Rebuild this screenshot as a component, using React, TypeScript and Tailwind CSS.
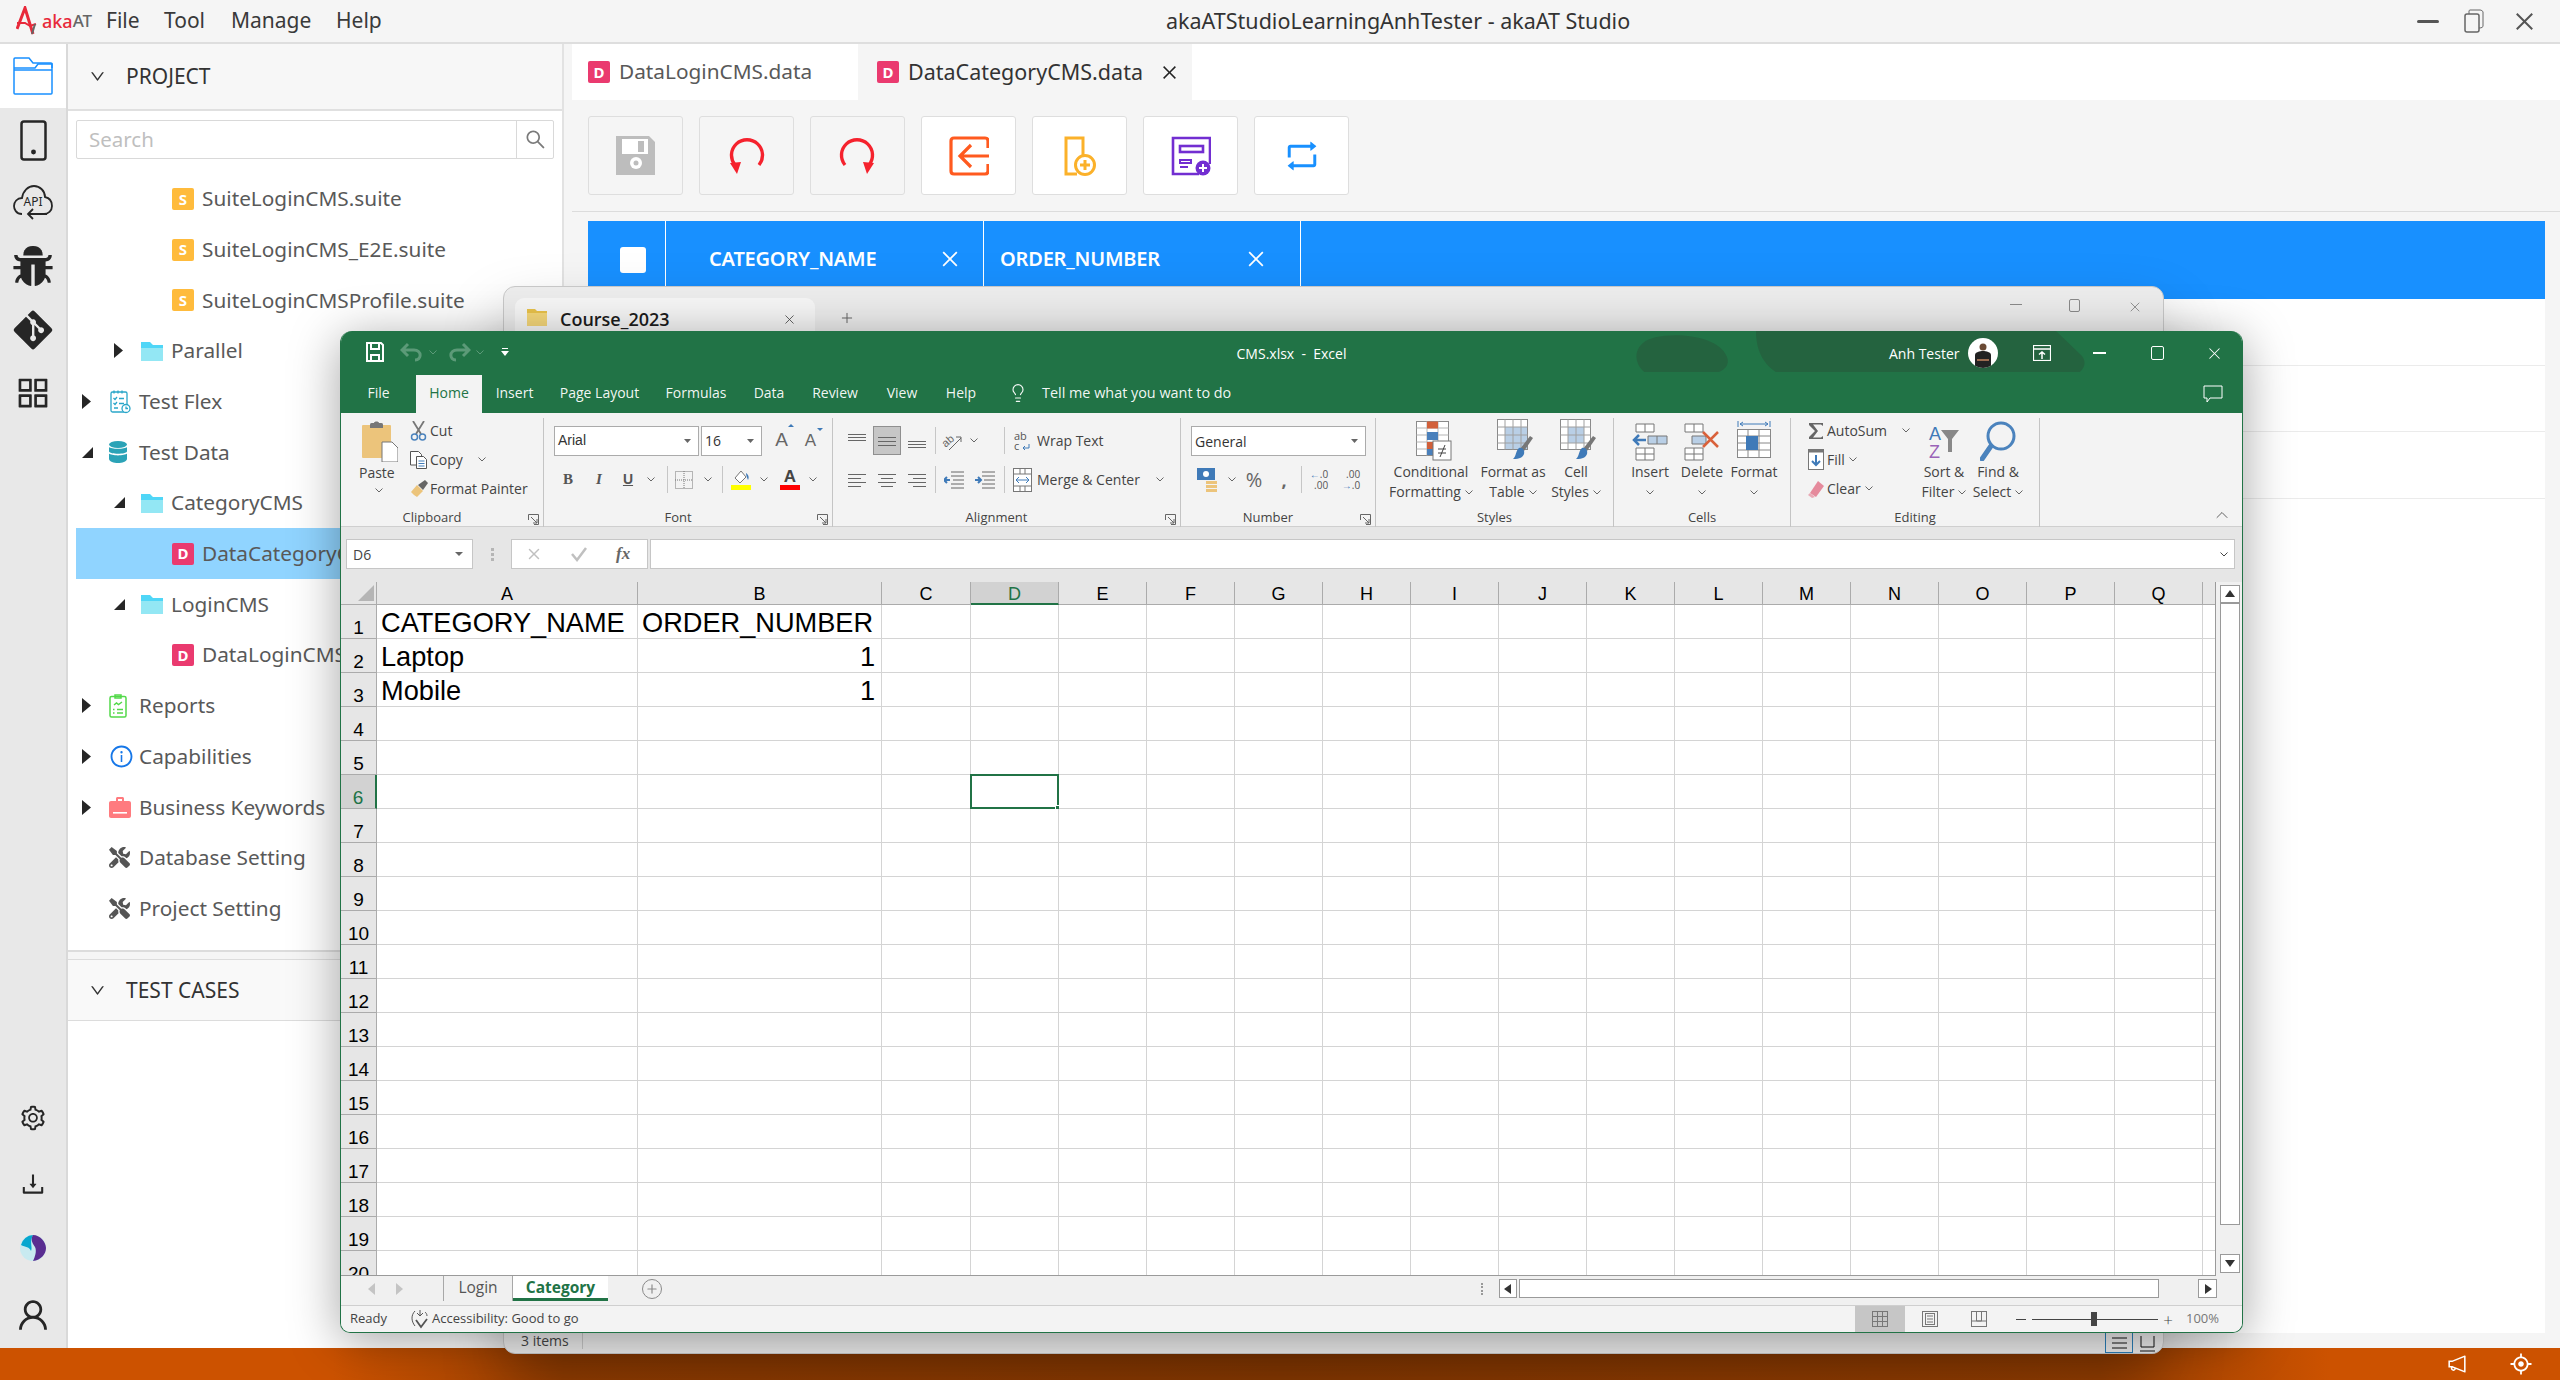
import type { ReactNode } from "react";
import { X, Lightbulb, Plus, ChevronUp } from "lucide-react";
import {
  AiFillBug,
  AiOutlineAppstore,
  AiOutlineSetting,
  AiOutlineDownload,
  AiOutlineUser,
  AiOutlineSearch,
  AiOutlineDown,
  AiOutlineClose,
  AiOutlineRetweet,
  AiOutlineInfoCircle,
  AiOutlineNotification,
  AiOutlineAim,
} from "react-icons/ai";
import { FaGitAlt, FaTools } from "react-icons/fa";

/* ---------- akaAT tree data ---------- */

type Kind = "suite" | "data" | "folder" | "flex" | "db" | "reports" | "info" | "case" | "tools";

const tree: { label: string; depth: number; kind: Kind; caret?: "right" | "open"; active?: boolean }[] = [
  { label: "SuiteLoginCMS.suite", depth: 2, kind: "suite" },
  { label: "SuiteLoginCMS_E2E.suite", depth: 2, kind: "suite" },
  { label: "SuiteLoginCMSProfile.suite", depth: 2, kind: "suite" },
  { label: "Parallel", depth: 1, kind: "folder", caret: "right" },
  { label: "Test Flex", depth: 0, kind: "flex", caret: "right" },
  { label: "Test Data", depth: 0, kind: "db", caret: "open" },
  { label: "CategoryCMS", depth: 1, kind: "folder", caret: "open" },
  { label: "DataCategoryCMS.data", depth: 2, kind: "data", active: true },
  { label: "LoginCMS", depth: 1, kind: "folder", caret: "open" },
  { label: "DataLoginCMS.data", depth: 2, kind: "data" },
  { label: "Reports", depth: 0, kind: "reports", caret: "right" },
  { label: "Capabilities", depth: 0, kind: "info", caret: "right" },
  { label: "Business Keywords", depth: 0, kind: "case", caret: "right" },
  { label: "Database Setting", depth: 0, kind: "tools" },
  { label: "Project Setting", depth: 0, kind: "tools" },
];

function Badge({ letter, color }: { letter: string; color: string }) {
  return (
    <span
      className={`w-[22px] h-[22px] rounded-[2px] flex items-center justify-center text-white font-bold text-[15px] font-['Noto_Sans',sans-serif] ${color}`}
    >
      {letter}
    </span>
  );
}

function TreeFolder() {
  return (
    <svg width="22" height="20" viewBox="0 0 22 20">
      <path d="M0 1h9l3 3h10v4H0z" fill="#4fd6f7" />
      <path d="M0 20V7h22v13z" fill="#93e7f4" />
    </svg>
  );
}

function TreeIcon({ kind }: { kind: Kind }) {
  if (kind === "suite") return <Badge letter="S" color="bg-[#ffbb3c]" />;
  if (kind === "data") return <Badge letter="D" color="bg-[#ea3a6f]" />;
  if (kind === "folder") return <TreeFolder />;
  if (kind === "flex")
    return (
      <svg width="22" height="24" viewBox="0 0 22 24" fill="none" stroke="#2aa6c9" strokeWidth="1.3">
        <rect x="2" y="2" width="16" height="20" rx="1.5" />
        <path d="M5 0.5v3M9 0.5v3M13 0.5v3M4.5 8l1.500 1.500 2-2.500M4.500 13l1.500 1.500 2-2.500M10 8.500h5M10 13.500h5M5 18h4" />
        <circle cx="17" cy="18.5" r="4" fill="#fff" />
        <path d="M17 16.5v2h2" />
      </svg>
    );
  if (kind === "db")
    return (
      <svg width="18" height="22" viewBox="0 0 18 22" fill="#2ba3b7">
        <ellipse cx="9" cy="3.5" rx="9" ry="3.5" />
        <path d="M0 6c2 2.400 16 2.400 18 0v4.400c-1 3-17 3-18 0zM0 12.600c2 2.400 16 2.400 18 0V18c-1 5.300-17 5.300-18 0z" />
      </svg>
    );
  if (kind === "reports")
    return (
      <svg width="18" height="24" viewBox="0 0 18 24" fill="none" stroke="#53d94a" strokeWidth="1.5">
        <rect x="1" y="2.500" width="16" height="20.500" rx="1.500" />
        <path d="M6 1h6v3H6zM5 11l2.500-2 2 1.500L13 8M4 15.500h1.500M8 15.500h6M4 19h1.500M8 19h6" />
      </svg>
    );
  if (kind === "info") return <AiOutlineInfoCircle className="text-[#1677e8]" size={25} />;
  if (kind === "case")
    return (
      <svg width="22" height="21" viewBox="0 0 22 21" fill="#ff7b7f">
        <path d="M7 4V1.500C7 .7 7.700 0 8.500 0h5c.8 0 1.500.7 1.500 1.500V4h-2V2H9v2z" />
        <path d="M2 4h18c1.100 0 2 .9 2 2v13c0 1.100-.9 2-2 2H2c-1.100 0-2-.9-2-2V6c0-1.100.9-2 2-2z" />
        <rect x="4" y="15" width="14" height="1.600" fill="#fff" />
      </svg>
    );
  return <FaTools className="text-[#555]" size={21} />;
}

function Caret({ type }: { type: "right" | "open" }) {
  return type === "right" ? (
    <svg width="9" height="15" viewBox="0 0 9 15">
      <path d="M0 0l9 7.500L0 15z" fill="#262626" />
    </svg>
  ) : (
    <svg width="11" height="11" viewBox="0 0 11 11">
      <path d="M11 0v11H0z" fill="#262626" />
    </svg>
  );
}

function TreeRow({ row }: { row: (typeof tree)[number] }) {
  return (
    <div className={`h-[50.7px] flex items-center shrink-0 ${row.active ? "bg-[#90d4ff]" : ""}`}>
      <span
        className={`shrink-0 flex justify-start ${
          row.depth === 0 ? "w-[33px] pl-[6px]" : row.depth === 1 ? "w-[65px] pl-[38px]" : "w-[96px]"
        }`}
      >
        {row.caret && <Caret type={row.caret} />}
      </span>
      <span className="w-[30px] shrink-0 flex items-center">
        <TreeIcon kind={row.kind} />
      </span>
      <span className="text-[20.800px] text-[#595959] whitespace-nowrap">{row.label}</span>
    </div>
  );
}

/* ---------- toolbar icons of the data editor ---------- */

function ArcArrow({ flip }: { flip?: boolean }) {
  return (
    <svg width="37" height="37" viewBox="0 0 37 37" className={flip ? "-scale-x-100" : ""}>
      <path d="M7 28A15.500 15.500 0 1 1 31 28" fill="none" stroke="#f5222d" strokeWidth="3.400" />
      <path d="M2 26l11-1-4 12z" fill="#f5222d" />
    </svg>
  );
}

function ToolBtn({ children, dim }: { children: ReactNode; dim?: boolean }) {
  return (
    <div
      className={`w-[95px] h-[79px] border border-[#dedede] rounded-[3px] flex items-center justify-center ${
        dim ? "" : "bg-white"
      }`}
    >
      {children}
    </div>
  );
}

function DataToolbar() {
  return (
    <div className="h-[112px] shrink-0 border-b border-[#dcdcdc] flex items-center gap-[16px] pl-[16px]">
      <ToolBtn dim>
        <svg width="39" height="39" viewBox="0 0 39 39">
          <path d="M0 0h33l6 6v33H0z" fill="#bdbdbd" />
          <rect x="6" y="3" width="26" height="15" fill="#fff" />
          <rect x="22" y="5" width="6" height="11" fill="#bdbdbd" />
          <circle cx="20" cy="27" r="6" fill="#fff" />
          <circle cx="20" cy="27" r="2.500" fill="#bdbdbd" />
        </svg>
      </ToolBtn>
      <ToolBtn dim>
        <ArcArrow />
      </ToolBtn>
      <ToolBtn dim>
        <ArcArrow flip />
      </ToolBtn>
      <ToolBtn>
        <svg width="40" height="40" viewBox="0 0 40 40" fill="none" stroke="#ff5a1f" strokeWidth="3.200">
          <path d="M39 12V5c0-2-1-3-3-3H5C3 2 2 3 2 5v30c0 2 1 3 3 3h31c2 0 3-1 3-3v-7" />
          <path d="M40 20H12M22 9L11 20l11 11" />
        </svg>
      </ToolBtn>
      <ToolBtn>
        <svg width="32" height="40" viewBox="0 0 32 40" fill="none" stroke="#fbb12a" strokeWidth="3">
          <path d="M19 22V2H2v36h11" />
          <circle cx="21" cy="29" r="9.500" fill="#fff" />
          <path d="M21 24v10M16 29h10" />
        </svg>
      </ToolBtn>
      <ToolBtn>
        <svg width="40" height="40" viewBox="0 0 40 40" fill="none" stroke="#722ed1" strokeWidth="2.600">
          <path d="M39 28V2H2v36h26" />
          <rect x="9" y="10" width="23" height="6" />
          <path d="M9 24h11v3H9zM9 31h8" strokeWidth="2" />
          <circle cx="32" cy="32" r="7.500" fill="#722ed1" stroke="none" />
          <path d="M32 28v8M28 32h8" stroke="#fff" strokeWidth="2" />
        </svg>
      </ToolBtn>
      <ToolBtn>
        <AiOutlineRetweet className="text-[#1890ff]" size={38} />
      </ToolBtn>
    </div>
  );
}

/* ---------- excel ---------- */

function Chev({ color = "#666" }: { color?: string }) {
  return (
    <svg width="8" height="5" viewBox="0 0 8 5" className="shrink-0">
      <path d="M.5.500L4 4 7.500.500" fill="none" stroke={color} strokeWidth="1" />
    </svg>
  );
}

function Expander() {
  return (
    <svg width="11" height="11" viewBox="0 0 11 11" className="absolute right-[4px] bottom-[2px]" fill="none" stroke="#666">
      <path d="M.5 6V.500H10.500V10.500H6M3 3l6 6M5 9h4V5" />
    </svg>
  );
}

function RibbonGroup({
  w,
  label,
  pad,
  expand,
  children,
}: {
  w: string;
  label: string;
  pad?: string;
  expand?: boolean;
  children: ReactNode;
}) {
  return (
    <div className={`shrink-0 h-[109px] mt-[5px] border-r border-[#c4c4c4] flex flex-col ${w}`}>
      <div className={`flex-1 min-h-0 ${pad ?? ""}`}>{children}</div>
      <div className={`relative h-[19px] text-center text-[13px] leading-[19px] text-[#444] ${expand ? "pr-[20px]" : ""}`}>
        {label}
        {expand && <Expander />}
      </div>
    </div>
  );
}

function Sep() {
  return <span className="w-[1px] h-[27px] bg-[#c6c6c6] shrink-0" />;
}

function Cell({ w, children }: { w: string; children?: ReactNode }) {
  return <span className={`shrink-0 flex items-center justify-center ${w}`}>{children}</span>;
}

function Lines({ rows, align }: { rows: number[]; align?: "left" | "center" | "right" }) {
  return (
    <svg width="18" height="16" viewBox="0 0 18 16" stroke="#666" strokeWidth="1">
      {rows.map((r, i) => {
        const short = align && i % 2 === 1;
        const x1 = short && align === "right" ? 5 : short && align === "center" ? 3 : 0;
        const x2 = short && align === "left" ? 13 : short && align === "center" ? 15 : 18;
        return <line key={i} x1={x1} x2={x2} y1={r + 0.5} y2={r + 0.5} />;
      })}
    </svg>
  );
}

function SmallRow({ icon, label, chev }: { icon: ReactNode; label: string; chev?: string }) {
  return (
    <div className="h-[29px] flex items-center">
      <span className="w-[23px] flex justify-center shrink-0">{icon}</span>
      <span>{label}</span>
      {chev && (
        <span className={chev}>
          <Chev />
        </span>
      )}
    </div>
  );
}

function BigBtn({ w, icon, lines, chevInline }: { w: string; icon: ReactNode; lines: string[]; chevInline?: boolean }) {
  return (
    <div className={`shrink-0 flex flex-col items-center leading-[20px] ${w}`}>
      <div className="h-[39px] flex items-end justify-center">{icon}</div>
      <div className="h-[1px]" />
      {lines.map((l, i) => (
        <div key={l} className="flex items-center gap-[4px] whitespace-nowrap">
          {l}
          {chevInline && i === lines.length - 1 && <Chev />}
        </div>
      ))}
      {!chevInline && (
        <div className="h-[20px] flex items-center">
          <Chev />
        </div>
      )}
    </div>
  );
}

function CondFormatIcon() {
  return (
    <svg width="36" height="40" viewBox="0 0 36 40" className="ml-[5px]">
      <rect x=".5" y=".5" width="32" height="34" fill="#fff" stroke="#8a8a8a" />
      <path d="M.5 7h32M.5 14h32M.5 21h32M.5 28h32M11 .5v34M22 .5v34" stroke="#b5b5b5" />
      <rect x="11" y=".5" width="11" height="7" fill="#d2603a" />
      <rect x="11" y="11" width="11" height="8" fill="#4a80bb" />
      <rect x="11" y="21" width="11" height="7" fill="#d2603a" />
      <rect x="11" y="28" width="11" height="6" fill="#4a80bb" />
      <rect x="17" y="20" width="18" height="19" fill="#fff" stroke="#777" />
      <path d="M22 28h8M22 32h8M29 24l-5 12" stroke="#444" fill="none" />
    </svg>
  );
}

function TableBrushIcon({ fillRect }: { fillRect: string }) {
  return (
    <svg width="36" height="42" viewBox="0 0 36 42" className="ml-[3px]">
      <rect x=".5" y=".5" width="30" height="30" fill="#fff" stroke="#8a8a8a" />
      <path d={fillRect} fill="#b9cfe6" />
      <path d="M.5 8h30M.5 16h30M.5 24h30M8 .5v30M16 .5v30M24 .5v30" stroke="#a0a0a0" />
      <path d="M33 17l3 2-9 13-4-2z" fill="#777" />
      <path d="M22 29c4-1 6 3 5 6-1 3-4 5-11 5 3-2 3-9 6-11z" fill="#3f7ab8" />
    </svg>
  );
}

function Ribbon() {
  return (
    <div className="h-[114px] shrink-0 bg-[#f3f3f3] border-b border-[#cfcfcf] flex text-[14px] text-[#444] font-['Open_Sans',sans-serif]">
      <RibbonGroup w="w-[203px]" label="Clipboard" expand>
        <div className="flex">
          <div className="w-[66px] pl-[21px] pt-[3px] flex flex-col items-start">
            <svg width="36" height="41" viewBox="0 0 36 41">
              <rect x="0" y="4" width="29" height="33" rx="1" fill="#ecc47b" />
              <path d="M8 4c0-2 1-2 3-2h1c0-2 5-2 5 0h1c2 0 3 0 3 2v3H8z" fill="#777" />
              <path d="M20 21h10l6 6v14H20z" fill="#fff" stroke="#777" />
            </svg>
            <span className="-ml-[3px] leading-[20px] mt-[1px]">Paste</span>
            <span className="ml-[13px] mt-[5px] block">
              <Chev />
            </span>
          </div>
          <div className="-mt-[2px]">
            <SmallRow
              icon={
                <svg width="17" height="20" viewBox="0 0 17 20" fill="none">
                  <path d="M3 0l8 13M14 0L6 13" stroke="#777" strokeWidth="1.800" />
                  <circle cx="4.500" cy="16" r="3" stroke="#4b83bd" strokeWidth="1.500" />
                  <circle cx="12.500" cy="16" r="3" stroke="#4b83bd" strokeWidth="1.500" />
                </svg>
              }
              label="Cut"
            />
            <SmallRow
              icon={
                <svg width="17" height="18" viewBox="0 0 17 18" fill="#fff" stroke="#555">
                  <path d="M.5.500h8l3 3V14H.5z" />
                  <path d="M6.500 5.500h7l3 3v9h-10z" />
                  <path d="M8.500 10h6M8.500 12.500h6M8.500 15h6" stroke="#3f7ab8" />
                </svg>
              }
              label="Copy"
              chev="ml-[15px]"
            />
            <SmallRow
              icon={
                <svg width="18" height="18" viewBox="0 0 18 18">
                  <path d="M1 12l6-7 6 6-6 6c-2-1-4-3-6-5z" fill="#ecc47b" />
                  <path d="M8 5l7-5 3 3-5 7z" fill="#666" />
                </svg>
              }
              label="Format Painter"
            />
          </div>
        </div>
      </RibbonGroup>

      <RibbonGroup w="w-[289px]" label="Font" expand pad="pl-[10px] pt-[8px]">
        <div className="flex items-center h-[29px]">
          <div className="w-[145px] h-[30px] bg-white border border-[#ababab] flex items-center justify-between px-[3px] pr-[7px] font-['Liberation_Sans',sans-serif] text-[#333]">
            Arial
            <svg width="7" height="4" viewBox="0 0 7 4"><path d="M0 0h7L3.500 4z" fill="#666" /></svg>
          </div>
          <div className="ml-[2px] w-[61px] h-[30px] bg-white border border-[#ababab] flex items-center justify-between px-[3px] pr-[7px] text-[#333]">
            16
            <svg width="7" height="4" viewBox="0 0 7 4"><path d="M0 0h7L3.500 4z" fill="#666" /></svg>
          </div>
          <span className="ml-[5px] w-[29px] text-center text-[19px] text-[#666] font-['Liberation_Sans',sans-serif] relative">
            A<span className="absolute -top-[2px] right-[2px] w-0 h-0 border-x-[3px] border-x-transparent border-b-[3px] border-b-[#3f7ab8]" />
          </span>
          <span className="w-[29px] text-center text-[17px] text-[#666] font-['Liberation_Sans',sans-serif] relative">
            A<span className="absolute -top-[0px] right-[2px] w-0 h-0 border-x-[3px] border-x-transparent border-t-[3px] border-t-[#3f7ab8]" />
          </span>
        </div>
        <div className="flex items-center h-[29px] mt-[10px] pl-[1px] font-['Liberation_Sans',sans-serif] text-[#555]">
          <Cell w="w-[26px]"><b className="font-['Liberation_Serif',serif] text-[15px]">B</b></Cell>
          <Cell w="w-[36px]"><i className="font-['Liberation_Serif',serif] font-bold text-[15px]">I</i></Cell>
          <Cell w="w-[22px]"><u className="font-bold text-[14px]">U</u></Cell>
          <Cell w="w-[24px]"><Chev /></Cell>
          <Cell w="w-[8px]"><Sep /></Cell>
          <Cell w="w-[26px]">
            <svg width="18" height="18" viewBox="0 0 18 18" fill="none" stroke="#777" strokeDasharray="1 1">
              <rect x=".5" y=".5" width="17" height="17" />
              <path d="M9 0v18M0 9h18" />
            </svg>
          </Cell>
          <Cell w="w-[22px]"><Chev /></Cell>
          <Cell w="w-[6px]"><Sep /></Cell>
          <Cell w="w-[32px]">
            <svg width="20" height="21" viewBox="0 0 20 21">
              <path d="M4 9l6-7 5 6-6 6z" fill="#fff" stroke="#777" />
              <path d="M15 4c3 2 3 5 2 7-1-2-2-5-2-7z" fill="#3f7ab8" />
              <rect y="16" width="20" height="5" fill="#ffff00" />
            </svg>
          </Cell>
          <Cell w="w-[14px]"><Chev /></Cell>
          <Cell w="w-[38px]">
            <span className="flex flex-col items-center">
              <b className="text-[17px] leading-[16px] text-[#444]">A</b>
              <span className="w-[20px] h-[5px] bg-[#ff0000]" />
            </span>
          </Cell>
          <Cell w="w-[8px]"><Chev /></Cell>
        </div>
      </RibbonGroup>

      <RibbonGroup w="w-[348px]" label="Alignment" expand pad="pl-[9px] pt-[8px]">
        <div className="flex items-center h-[29px]">
          <Cell w="w-[30px]"><Lines rows={[1, 4, 7]} /></Cell>
          <Cell w="w-[30px]">
            <span className="w-[28px] h-[29px] bg-[#c6c6c6] border border-[#8f8f8f] flex items-center justify-center">
              <Lines rows={[4, 8, 12]} />
            </span>
          </Cell>
          <Cell w="w-[30px]"><Lines rows={[8, 11, 14]} /></Cell>
          <Cell w="w-[6px]"><Sep /></Cell>
          <Cell w="w-[28px]">
            <svg width="22" height="22" viewBox="0 0 22 22">
              <text x="1" y="14" fontSize="11" fill="#666" transform="rotate(-40 8 11)" fontFamily="Liberation Sans">ab</text>
              <path d="M8 20L20 8M15 7h5v5" fill="none" stroke="#666" />
            </svg>
          </Cell>
          <Cell w="w-[16px]"><Chev /></Cell>
          <span className="w-[19px]" />
          <Cell w="w-[6px]"><Sep /></Cell>
          <Cell w="w-[30px]">
            <span className="text-[11px] leading-[10px] text-[#555] relative w-[16px]">
              ab
              <br />c
              <svg width="8" height="7" viewBox="0 0 8 7" className="absolute right-0 bottom-0" fill="none" stroke="#3f7ab8">
                <path d="M7 0v4H1M3 2L1 4l2 2" />
              </svg>
            </span>
          </Cell>
          <span>Wrap Text</span>
        </div>
        <div className="flex items-center h-[29px] mt-[10px]">
          <Cell w="w-[30px]"><Lines rows={[2, 6, 10, 14]} align="left" /></Cell>
          <Cell w="w-[30px]"><Lines rows={[2, 6, 10, 14]} align="center" /></Cell>
          <Cell w="w-[30px]"><Lines rows={[2, 6, 10, 14]} align="right" /></Cell>
          <Cell w="w-[6px]"><Sep /></Cell>
          <Cell w="w-[32px]">
            <svg width="20" height="18" viewBox="0 0 20 18" stroke="#666">
              <path d="M7 1h13M7 5h13M9 9h11M7 13h13M7 17h13" />
              <path d="M6 9H0M3 6L0 9l3 3" stroke="#3f7ab8" strokeWidth="2" fill="none" />
            </svg>
          </Cell>
          <Cell w="w-[30px]">
            <svg width="20" height="18" viewBox="0 0 20 18" stroke="#666">
              <path d="M7 1h13M7 5h13M9 9h11M7 13h13M7 17h13" />
              <path d="M0 9h6M3 6l3 3-3 3" stroke="#3f7ab8" strokeWidth="2" fill="none" />
            </svg>
          </Cell>
          <span className="w-[1px]" />
          <Cell w="w-[6px]"><Sep /></Cell>
          <Cell w="w-[30px]">
            <svg width="19" height="24" viewBox="0 0 19 24" fill="none" stroke="#777">
              <rect x=".5" y=".5" width="18" height="23" fill="#fff" />
              <path d="M0 6h19M0 18h19M7 0v6M12 0v6M7 18v6M12 18v6" />
              <path d="M3 12h13M6 9l-3 3 3 3M13 9l3 3-3 3" stroke="#3f7ab8" />
            </svg>
          </Cell>
          <span>Merge &amp; Center</span>
          <span className="ml-[16px]"><Chev /></span>
        </div>
      </RibbonGroup>

      <RibbonGroup w="w-[195px]" label="Number" expand pad="pl-[10px] pt-[8px]">
        <div className="w-[175px] h-[30px] bg-white border border-[#ababab] flex items-center justify-between px-[3px] pr-[7px] text-[#333]">
          General
          <svg width="7" height="4" viewBox="0 0 7 4"><path d="M0 0h7L3.500 4z" fill="#666" /></svg>
        </div>
        <div className="flex items-center h-[29px] mt-[9px]">
          <Cell w="w-[34px]">
            <svg width="22" height="24" viewBox="0 0 22 24">
              <rect width="18" height="12" fill="#3f7ab8" />
              <circle cx="9" cy="6" r="3" fill="#fff" />
              <rect x="9" y="13" width="11" height="3" fill="#ecc47b" />
              <rect x="9" y="17" width="11" height="3" fill="#ecc47b" />
              <rect x="9" y="21" width="11" height="3" fill="#ecc47b" />
            </svg>
          </Cell>
          <Cell w="w-[14px]"><Chev /></Cell>
          <Cell w="w-[30px]"><span className="text-[20px] text-[#666]">%</span></Cell>
          <Cell w="w-[30px]"><b className="text-[18px] leading-[10px] text-[#666]">,</b></Cell>
          <span className="w-[2px]" />
          <Sep />
          <Cell w="w-[34px]">
            <span className="text-[10px] leading-[11px] text-[#555] text-right">
              <span className="text-[#3f7ab8]">←</span>.0
              <br />.00
            </span>
          </Cell>
          <Cell w="w-[30px]">
            <span className="text-[10px] leading-[11px] text-[#555] text-right">
              .00
              <br />
              <span className="text-[#3f7ab8]">→</span>.0
            </span>
          </Cell>
        </div>
      </RibbonGroup>

      <RibbonGroup w="w-[238px]" label="Styles" pad="pl-[5px] pt-[4px] flex">
        <BigBtn w="w-[100px]" icon={<CondFormatIcon />} lines={["Conditional", "Formatting"]} chevInline />
        <BigBtn w="w-[64px]" icon={<TableBrushIcon fillRect="M8 8h22v22H8z" />} lines={["Format as", "Table"]} chevInline />
        <BigBtn w="w-[62px]" icon={<TableBrushIcon fillRect="M8 8h16v16H8z" />} lines={["Cell", "Styles"]} chevInline />
      </RibbonGroup>

      <RibbonGroup w="w-[177px]" label="Cells" pad="pl-[10px] pt-[4px] flex">
        <BigBtn
          w="w-[52px]"
          lines={["Insert"]}
          icon={
            <svg width="36" height="38" viewBox="0 0 36 38" fill="#fff" stroke="#777">
              <path d="M4 1h18v8H4zM13 1v8M4 25h18v12H4zM4 31h18M13 25v12" />
              <path d="M16 13h19v8H16zM25 13v8" fill="#b9cfe6" />
              <path d="M14 17H2M7 12l-5 5 5 5" fill="none" stroke="#3f7ab8" strokeWidth="2.500" />
            </svg>
          }
        />
        <BigBtn
          w="w-[52px]"
          lines={["Delete"]}
          icon={
            <svg width="36" height="38" viewBox="0 0 36 38" fill="#fff" stroke="#777">
              <path d="M1 1h18v8H1zM10 1v8M1 25h18v12H1zM1 31h18M10 25v12" />
              <path d="M8 13h14v8H8z" fill="#b9cfe6" />
              <path d="M19 9l15 15M34 9L19 24" stroke="#d9613b" strokeWidth="2.500" fill="none" />
            </svg>
          }
        />
        <BigBtn
          w="w-[52px]"
          lines={["Format"]}
          icon={
            <svg width="34" height="40" viewBox="0 0 34 40" fill="#fff" stroke="#888">
              <path d="M1 0v6M33 0v6M3 3h28M3 3l3-2M3 3l3 2M31 3l-3-2M31 3l-3 2" stroke="#3f7ab8" fill="none" />
              <rect x=".5" y="8.500" width="33" height="28" />
              <path d="M0 15h34M0 22h34M0 29h34M11 8v28M22 8v28" fill="none" />
              <rect x="9" y="15" width="12" height="14" fill="#3f7ab8" stroke="none" />
            </svg>
          }
        />
      </RibbonGroup>

      <RibbonGroup w="w-[249px]" label="Editing" pad="pl-[13px] flex">
        <div className="w-[114px] -mt-[2px]">
          <SmallRow
            icon={
              <svg width="16" height="18" viewBox="0 0 16 18">
                <path d="M1 1h14v3l-2-1.500H5l5 6.500-5 6.500h8l2-1.500v3H1v-2l6-6-6-6z" fill="#666" />
              </svg>
            }
            label="AutoSum"
            chev="ml-[15px]"
          />
          <SmallRow
            icon={
              <svg width="16" height="21" viewBox="0 0 16 21" fill="#fff" stroke="#777">
                <rect x=".5" y=".5" width="15" height="20" />
                <rect y="0" width="16" height="3" fill="#777" />
                <path d="M8 6v10M4 12l4 4 4-4" stroke="#3f7ab8" strokeWidth="2" fill="none" />
              </svg>
            }
            label="Fill"
            chev="ml-[4px]"
          />
          <SmallRow
            icon={
              <svg width="16" height="18" viewBox="0 0 16 18">
                <path d="M10 1l6 5-8 11-6-4z" fill="#e58a9c" />
                <path d="M2 13l-2 2 4 3 3-1z" fill="#e9a9b6" />
              </svg>
            }
            label="Clear"
            chev="ml-[4px]"
          />
        </div>
        <div className="flex pt-[4px]">
          <BigBtn
            w="w-[52px]"
            lines={["Sort &", "Filter"]}
            chevInline
            icon={
              <span className="flex items-start">
                <span className="flex flex-col text-[18px] leading-[18px] font-['Liberation_Sans',sans-serif]">
                  <span className="text-[#3f7ab8]">A</span>
                  <span className="text-[#9a63b8]">Z</span>
                </span>
                <svg width="18" height="24" viewBox="0 0 18 24" className="mt-[5px]">
                  <path d="M0 0h18l-7 9v13H7V9z" fill="#888" />
                </svg>
              </span>
            }
          />
          <BigBtn
            w="w-[56px]"
            lines={["Find &", "Select"]}
            chevInline
            icon={
              <svg width="36" height="40" viewBox="0 0 36 40" fill="none" stroke="#4b83bd">
                <circle cx="21" cy="15" r="13" strokeWidth="3" />
                <path d="M11 25L2 38" strokeWidth="5" strokeLinecap="round" />
              </svg>
            }
          />
        </div>
      </RibbonGroup>

      <div className="flex-1 flex items-end justify-end pr-[10px] pb-[1px]">
        <ChevronUp size={20} strokeWidth={1} className="text-[#444]" />
      </div>
    </div>
  );
}

const cols = ["A", "B", "C", "D", "E", "F", "G", "H", "I", "J", "K", "L", "M", "N", "O", "P", "Q", "R"];
const cellData: Record<string, string> = {
  A1: "CATEGORY_NAME",
  B1: "ORDER_NUMBER",
  A2: "Laptop",
  B2: "1",
  A3: "Mobile",
  B3: "1",
};

function Sheet() {
  const rows = Array.from({ length: 20 }, (_, i) => i + 1);
  return (
    <div className="flex-1 min-w-0 overflow-hidden border-r border-b border-[#9a9a9a] bg-white grid grid-cols-[36px_261px_244px_89px_repeat(14,88px)_14px] grid-rows-[23px_repeat(20,34px)] font-['Liberation_Sans',sans-serif] text-black">
      <div className="bg-[#e6e6e6] border-r border-b border-[#ababab] flex items-end justify-end p-[3px] pr-[2px]">
        <svg width="16" height="16" viewBox="0 0 16 16"><path d="M16 0v16H0z" fill="#b5b5b5" /></svg>
      </div>
      {cols.map((c) => (
        <div
          key={c}
          className={`text-[18px] leading-[25px] text-center border-r ${
            c === "D"
              ? "bg-[#d2d2d2] text-[#217346] border-b-[2px] border-b-[#217346] border-r-[#ababab]"
              : "bg-[#e6e6e6] border-b border-[#ababab]"
          }`}
        >
          {c === "R" ? "" : c}
        </div>
      ))}
      {rows.map((r) => (
        <RowCells key={r} r={r} />
      ))}
    </div>
  );
}

function RowCells({ r }: { r: number }) {
  return (
    <>
      <div
        className={`text-[19px] text-center leading-[20px] pt-[13px] border-b border-[#ababab] ${
          r === 6 ? "bg-[#d2d2d2] text-[#217346] border-r-[2px] border-r-[#217346]" : "bg-[#e6e6e6] border-r"
        }`}
      >
        {r}
      </div>
      {cols.map((c) => {
        const v = cellData[`${c}${r}`];
        const num = v === "1";
        return (
          <div
            key={c}
            className={`relative border-r border-b border-[#d4d4d4] text-[27.200px] leading-[36px] whitespace-nowrap ${
              num ? "text-right pr-[6px]" : "pl-[4px]"
            }`}
          >
            {v}
            {c === "D" && r === 6 && (
              <span className="absolute -left-[1px] -top-[1px] -right-[1px] -bottom-[1px] border-2 border-[#217346]">
                <span className="absolute -right-[3px] -bottom-[3px] w-[5px] h-[5px] bg-[#217346] border border-white" />
              </span>
            )}
          </div>
        );
      })}
    </>
  );
}

function TriBtn({ dir, cls }: { dir: "up" | "down" | "left" | "right"; cls: string }) {
  const d = { up: "M5 1l5 7H0z", down: "M0 1h10L5 8z", left: "M8 0v10L1 5z", right: "M2 0v10l7-5z" }[dir];
  return (
    <div className={`bg-white border border-[#9a9a9a] flex items-center justify-center shrink-0 ${cls}`}>
      <svg width="10" height="10" viewBox="0 0 10 10">
        <path d={d} fill="#333" />
      </svg>
    </div>
  );
}

function ExcelWindow() {
  return (
    <div className="absolute z-20 left-[340px] top-[331px] w-[1903px] h-[1002px] rounded-t-[12px] rounded-b-[10px] bg-[#f3f3f3] border border-[#217346] border-t-0 flex flex-col overflow-hidden shadow-[0_8px_50px_rgba(0,0,0,0.36)] font-['Open_Sans',sans-serif]">
      {/* title row with the green pattern */}
      <div className="relative h-[41px] shrink-0 bg-[#217346] text-white flex items-center pt-[4px]">
        <svg width="620" height="82" viewBox="0 0 620 82" className="absolute left-[1290px] top-0" fill="#24633f">
          <path d="M12 12c12-12 74-12 84 14 6 16-20 22-62 22l-22 8 6-12C6 38 0 22 12 12z" />
          <path d="M125 0h300l26 25c10 14-10 30-60 26-30 8-60 12-90 2-30 4-66 10-90 6-40-6-86-10-86-59z" />
          <path d="M500 56c10-12 40-20 76-8 10 10-30 22-76 8z" />
        </svg>
        <div className="absolute left-[25px] top-[11px] flex items-center">
          <svg width="18" height="20" viewBox="0 0 18 20" fill="none" stroke="#fff" strokeWidth="2">
            <path d="M1 1h14l2 2v16H1z" />
            <path d="M5 1v6h8V1M5 19v-6h8v6" />
          </svg>
          <svg width="24" height="20" viewBox="0 0 24 20" fill="none" stroke="#5c9a78" strokeWidth="3" className="ml-[16px]">
            <path d="M8 2L2 8l6 6M3 8h11c8 0 8 10 1 10" />
          </svg>
          <span className="ml-[5px]"><Chev color="#5c9a78" /></span>
          <svg width="24" height="20" viewBox="0 0 24 20" fill="none" stroke="#5c9a78" strokeWidth="3" className="ml-[10px]">
            <path d="M16 2l6 6-6 6M21 8H10C2 8 2 18 9 18" />
          </svg>
          <span className="ml-[5px]"><Chev color="#5c9a78" /></span>
          <svg width="8" height="8" viewBox="0 0 8 8" className="ml-[17px]" fill="#fff">
            <path d="M1 0h6v1H1zM0 3h8L4 8z" />
          </svg>
        </div>
        <span className="relative mx-auto text-[14px]">CMS.xlsx &nbsp;-&nbsp; Excel</span>
        <div className="absolute left-[1548px] top-[7px] flex items-center">
          <span className="text-[14px] w-[79px]">Anh Tester</span>
          <span className="w-[30px] h-[30px] rounded-full bg-white overflow-hidden flex items-center justify-center">
            <svg width="20" height="30" viewBox="0 0 20 30">
              <circle cx="10" cy="9" r="3.500" fill="#6b4a35" />
              <path d="M2 30V17c0-3 5-4 8-4s8 1 8 4v13z" fill="#222" />
              <path d="M4 21h12v2H4z" fill="#9a6b4f" />
            </svg>
          </span>
          <svg width="18" height="16" viewBox="0 0 18 16" fill="none" stroke="#fff" strokeWidth="1.200" className="ml-[35px]">
            <rect x=".5" y=".5" width="17" height="15" />
            <path d="M0 4h18M9 14V7M6 9.500L9 7l3 2.500" strokeWidth="1.500" />
          </svg>
          <span className="w-[13px] h-[1.500px] bg-white ml-[42px]" />
          <span className="w-[13px] h-[14px] border border-white rounded-[2px] ml-[45px]" />
          <X size={19} strokeWidth={1.300} className="text-white ml-[41px]" />
        </div>
      </div>

      {/* ribbon tabs */}
      <div className="relative h-[41px] shrink-0 bg-[#217346] text-white/95 text-[14px] flex items-end">
        {[
          ["File", "w-[75px]"],
          ["Home", "w-[66px] bg-[#f3f3f3] text-[#217346]"],
          ["Insert", "w-[65px]"],
          ["Page Layout", "w-[105px]"],
          ["Formulas", "w-[88px]"],
          ["Data", "w-[58px]"],
          ["Review", "w-[74px]"],
          ["View", "w-[60px]"],
          ["Help", "w-[58px]"],
        ].map(([label, cls]) => (
          <div key={label} className={`h-[38px] leading-[36px] text-center ${cls}`}>
            {label}
          </div>
        ))}
        <div className="h-[38px] flex items-center ml-[18px] gap-[14px] pb-[2px]">
          <Lightbulb size={20} strokeWidth={1.400} />
          <span className="text-[14.400px]">Tell me what you want to do</span>
        </div>
        <svg width="20" height="20" viewBox="0 0 20 20" fill="none" stroke="#fff" className="absolute right-[19px] top-[12px]">
          <path d="M1 2h18v12H7l-3 4v-4H1z" />
        </svg>
      </div>

      <Ribbon />

      {/* formula bar */}
      <div className="h-[55px] shrink-0 bg-[#e6e6e6] flex items-start pt-[12px] pl-[5px] pr-[7px] text-[14px]">
        <div className="w-[127px] h-[30px] bg-white border border-[#c6c6c6] flex items-center justify-between pl-[6px] pr-[9px] text-[#444]">
          D6
          <svg width="8" height="4" viewBox="0 0 8 4"><path d="M0 0h8L4 4z" fill="#666" /></svg>
        </div>
        <div className="w-[38px] h-[30px] flex flex-col items-center justify-center gap-[2px]">
          <span className="w-[3px] h-[3px] bg-[#b5b5b5]" />
          <span className="w-[3px] h-[3px] bg-[#b5b5b5]" />
          <span className="w-[3px] h-[3px] bg-[#b5b5b5]" />
        </div>
        <div className="w-[137px] h-[30px] bg-white border border-[#c6c6c6] flex items-center">
          <X size={18} strokeWidth={2} className="ml-[13px] text-[#c0c0c0]" />
          <svg width="18" height="16" viewBox="0 0 18 16" className="ml-[27px]" fill="none" stroke="#c0c0c0" strokeWidth="2.500">
            <path d="M2 8l5 6L16 2" />
          </svg>
          <i className="ml-[28px] font-['Liberation_Serif',serif] font-bold text-[17px] text-[#666]">fx</i>
        </div>
        <div className="flex-1 h-[30px] ml-[2px] bg-white border border-[#c6c6c6] flex items-center justify-end pr-[6px]">
          <Chev color="#444" />
        </div>
      </div>

      {/* grid + vertical scrollbar */}
      <div className="h-[694px] shrink-0 flex bg-[#f0f0f0]">
        <Sheet />
        <div className="w-[26px] shrink-0 flex flex-col items-center py-[3px] pl-[2px]">
          <TriBtn dir="up" cls="w-[20px] h-[18px]" />
          <div className="w-[20px] h-[622px] bg-white border border-[#9a9a9a]" />
          <div className="flex-1" />
          <TriBtn dir="down" cls="w-[20px] h-[19px]" />
        </div>
      </div>

      {/* sheet tabs */}
      <div className="h-[30px] shrink-0 bg-[#f0f0f0] border-b border-[#cfcfcf] flex items-start text-[15.500px]">
        <div className="w-[103px] h-[25px] flex items-center border-r border-[#a8a8a8]">
          <svg width="7" height="12" viewBox="0 0 7 12" className="ml-[27px]"><path d="M7 0v12L0 6z" fill="#c4c4c4" /></svg>
          <svg width="7" height="12" viewBox="0 0 7 12" className="ml-[21px]"><path d="M0 0v12l7-6z" fill="#c4c4c4" /></svg>
        </div>
        <div className="w-[69px] h-[25px] leading-[23px] text-center text-[#555] border-r border-[#a8a8a8]">Login</div>
        <div className="w-[95px] h-[25px] leading-[23px] text-center font-bold text-[#217346] bg-white border-b-[3px] border-[#217346]">
          Category
        </div>
        <span className="ml-[34px] mt-[3px] w-[20px] h-[20px] rounded-full border-[1.500px] border-[#8a8a8a] flex items-center justify-center text-[#8a8a8a]">
          <Plus size={14} strokeWidth={2} />
        </span>
        <div className="flex-1 flex items-center justify-end h-[25px] pr-[25px]">
          <div className="w-[3px] h-[12px] border-l-2 border-dotted border-[#999] mr-[15px]" />
          <TriBtn dir="left" cls="w-[18px] h-[19px]" />
          <div className="w-[640px] h-[19px] bg-white border border-[#9a9a9a] ml-[2px]" />
          <div className="w-[39px]" />
          <TriBtn dir="right" cls="w-[19px] h-[19px]" />
        </div>
      </div>

      {/* status bar */}
      <div className="flex-1 bg-[#f3f3f3] flex items-center text-[13px] text-[#444] pl-[9px]">
        <span>Ready</span>
        <svg width="20" height="20" viewBox="0 0 20 20" fill="none" stroke="#555" className="ml-[23px]">
          <path d="M5 2C1 6 1 12 5 17M10 1v6M7 4l3 3 3-3M15 3c1 1 2 2 2 4" />
          <path d="M6 11l5 7 6-8" strokeWidth="1.800" />
        </svg>
        <span className="ml-[2px]">Accessibility: Good to go</span>
        <div className="ml-auto flex items-center h-full">
          <span className="w-[50px] h-full bg-[#c6c6c6] flex items-center justify-center">
            <svg width="16" height="16" viewBox="0 0 16 16" fill="none" stroke="#777">
              <rect x=".5" y=".5" width="15" height="15" />
              <path d="M0 5.500h16M0 10.500h16M5.500 0v16M10.500 0v16" />
            </svg>
          </span>
          <span className="w-[50px] flex justify-center">
            <svg width="16" height="16" viewBox="0 0 16 16" fill="none" stroke="#777">
              <rect x=".5" y=".5" width="15" height="15" />
              <rect x="3.500" y="2.500" width="9" height="11" />
              <path d="M5 5h6M5 8h6M5 11h6" />
            </svg>
          </span>
          <span className="w-[48px] flex justify-center">
            <svg width="16" height="16" viewBox="0 0 16 16" fill="none" stroke="#777">
              <rect x=".5" y=".5" width="15" height="15" />
              <path d="M5.500 0v10h5V0M0 10h16" />
            </svg>
          </span>
          <span className="w-[10px] h-[1px] bg-[#444] ml-[13px]" />
          <span className="relative w-[126px] h-[1px] bg-[#444] ml-[6px] flex items-center">
            <span className="absolute left-[59px] w-[6px] h-[14px] bg-[#444]" />
          </span>
          <span className="ml-[5px] text-[17px] font-light leading-none">+</span>
          <span className="ml-[13px] w-[56px] text-[#777]">100%</span>
        </div>
      </div>
    </div>
  );
}

function ExplorerWindow() {
  return (
    <div className="absolute z-10 left-[503px] top-[286px] w-[1661px] h-[1068px] rounded-[12px] bg-[#ececec] border border-[#c8c8c8] shadow-[0_30px_60px_rgba(0,0,0,0.25)] font-['Open_Sans',sans-serif] flex flex-col">
      <div className="h-[45px] shrink-0 flex items-end pl-[11px]">
        <div className="w-[300px] h-[34px] rounded-t-[9px] bg-[#f6f6f6] flex items-center pl-[12px] pt-[8px]">
          <svg width="20" height="17" viewBox="0 0 20 17" className="shrink-0 -mt-[4px]">
            <path d="M0 0h8l2 2h10v15H0z" fill="#e8c24a" />
            <path d="M0 4h20v13H0z" fill="#f5d77a" />
          </svg>
          <span className="ml-[13px] font-semibold text-[#1c1c1c] text-[18px] leading-none">Course_2023</span>
          <X size={15} strokeWidth={1.300} className="ml-auto mr-[18px] text-[#444]" />
        </div>
        <Plus size={16} strokeWidth={1.500} className="ml-[24px] mb-[6px] text-[#666]" />
        <div className="ml-auto h-[45px] flex items-start pt-[12px] pr-[20px] gap-[47px]">
          <span className="w-[12px] h-[1px] bg-[#8a8a8a] mt-[5px]" />
          <span className="w-[11px] h-[13px] border border-[#8a8a8a] rounded-[2px]" />
          <X size={16} strokeWidth={1} className="text-[#666]" />
        </div>
      </div>
      <div className="flex-1" />
      <div className="h-[21px] shrink-0 flex items-center pl-[17px] text-[14px] text-[#444] rounded-b-[12px]">
        <span className="w-[62px] border-r border-[#c8c8c8] leading-[16px] -mt-[4px]">3 items</span>
        <div className="ml-auto flex items-end h-full pr-[2px]">
          <span className="w-[28px] h-[21px] border border-[#2a7fb8] flex items-end justify-center pb-[1px]">
            <svg width="15" height="16" viewBox="0 0 15 16" stroke="#111"><path d="M0 3h15M0 8h15M0 13h15" /></svg>
          </span>
          <span className="w-[28px] h-[21px] flex items-end justify-center pb-[1px]">
            <svg width="15" height="16" viewBox="0 0 15 16" stroke="#111" fill="none"><path d="M1 0v11h13V0M0 15h15" /></svg>
          </span>
        </div>
      </div>
    </div>
  );
}

/* ---------- akaAT shell ---------- */

function AkaLogo() {
  return (
    <span className="flex items-center w-[106px] pl-[16px] shrink-0">
      <svg width="21" height="30" viewBox="0 0 21 30" fill="none" stroke="#e8293a" strokeWidth="3">
        <path d="M1 23L9 2l8 26" />
        <path d="M1 17l8 0 5 3 6-2" strokeWidth="2" stroke="#e8293a" />
        <path d="M16 28l3-10" stroke="#666" strokeWidth="2" />
      </svg>
      <span className="ml-[5px] text-[18px] font-medium text-[#e8293a]">aka</span>
      <span className="text-[17px] font-medium text-[#666]">AT</span>
    </span>
  );
}

function ActivityBar() {
  return (
    <div className="w-[66px] shrink-0 bg-[#e8e8e8] border-r-[2px] border-[#d9d9d9] box-content flex flex-col items-center text-[#262626]">
      <div className="w-full h-[64px] bg-white flex items-center justify-center">
        <svg width="40" height="38" viewBox="0 0 40 38" fill="none" stroke="#1890ff" strokeWidth="1.500">
          <path d="M1 36V2c0-.6.4-1 1-1h14l4 5h18c.6 0 1 .4 1 1v29c0 .6-.4 1-1 1H2c-.6 0-1-.4-1-1z" />
          <path d="M1 11h21l3-4h14v4M1 13h38" />
        </svg>
      </div>
      <div className="h-[64px] flex items-center justify-center">
        <svg width="27" height="41" viewBox="0 0 27 41" fill="none" stroke="#262626" strokeWidth="2.500">
          <rect x="1.500" y="1.500" width="24" height="38" rx="2.500" />
          <circle cx="13.500" cy="32" r="1.200" fill="#262626" />
        </svg>
      </div>
      <div className="h-[62px] flex items-center justify-center">
        <svg width="40" height="36" viewBox="0 0 40 36" fill="none" stroke="#262626" strokeWidth="1.800">
          <path d="M9 29C3 29 1 24 1 21c0-4 3-8 8-8 1-7 6-12 12-12 6 0 11 5 11 11 5 1 7 5 7 9 0 5-4 8-8 8" />
          <path d="M34 29H16M20 24l-5 5 5 5" />
          <text x="20" y="21" textAnchor="middle" fontSize="12" fill="#262626" stroke="none" fontFamily="Noto Sans">API</text>
        </svg>
      </div>
      <div className="h-[64px] flex items-center justify-center">
        <AiFillBug size={46} />
      </div>
      <div className="h-[63px] flex items-center justify-center">
        <FaGitAlt size={44} />
      </div>
      <div className="h-[64px] flex items-center justify-center">
        <AiOutlineAppstore size={40} />
      </div>
      <div className="mt-auto flex flex-col items-center pb-[14px]">
        <AiOutlineSetting size={28} />
        <AiOutlineDownload size={28} className="mt-[38px]" />
        <svg width="26" height="26" viewBox="0 0 26 26" className="mt-[37px]">
          <circle cx="13" cy="13" r="13" fill="#c8eaf0" />
          <path d="M13 0A13 13 0 0 0 1 10c4 2 9 2 10 6 2-4-2-8 2-16z" fill="#07a7cf" />
          <path d="M13 0c-3 5 0 9 2 12 2 4 0 10-2 14 8-1 13-7 13-13S20 0 13 0z" fill="#5a2d91" />
        </svg>
        <AiOutlineUser size={38} className="mt-[35px]" />
      </div>
    </div>
  );
}

function SidePanel() {
  return (
    <div className="w-[496px] shrink-0 flex flex-col bg-[#ececec] border-r-[2px] border-[#e2e2e2] overflow-hidden">
      <div className="h-[908px] shrink-0 flex flex-col bg-white border-b-[2px] border-[#dcdcdc]">
        <div className="h-[67px] shrink-0 bg-[#f7f7f7] border-b-[2px] border-[#e0e0e0] flex items-center pl-[21px]">
          <AiOutlineDown size={17} className="text-[#333]" />
          <span className="ml-[20px] text-[21px] text-[#333] pt-[1px]">PROJECT</span>
        </div>
        <div className="mx-[8px] mt-[9px] h-[39px] shrink-0 border border-[#d9d9d9] rounded-[2px] flex">
          <span className="flex-1 pl-[12px] text-[20.500px] leading-[36px] text-[#bfbfbf]">Search</span>
          <span className="w-[37px] border-l border-[#d9d9d9] flex items-center justify-center">
            <AiOutlineSearch size={23} className="text-[#7a7a7a]" />
          </span>
        </div>
        <div className="mt-[14.500px] ml-[8px] flex flex-col">
          {tree.map((row) => (
            <TreeRow key={row.label} row={row} />
          ))}
        </div>
      </div>
      <div className="h-[7px] shrink-0 bg-[#f5f5f5]" />
      <div className="h-[62px] shrink-0 bg-[#f9f9f9] border-y border-[#dcdcdc] flex items-center pl-[21px]">
        <AiOutlineDown size={17} className="text-[#333]" />
        <span className="ml-[20px] text-[21px] text-[#333] pt-[2px]">TEST CASES</span>
      </div>
      <div className="flex-1 bg-white" />
    </div>
  );
}

function EditorPane() {
  return (
    <div className="flex-1 min-w-0 pl-[8px] flex flex-col">
      <div className="h-[56px] shrink-0 flex">
        <div className="w-[286px] bg-white flex items-center pl-[16px] text-[#595959] text-[20.800px]">
          <Badge letter="D" color="bg-[#ea3a6f]" />
          <span className="ml-[9px]">DataLoginCMS.data</span>
        </div>
        <div className="w-[334px] flex items-center pl-[19px] text-[#333] text-[21.500px]">
          <Badge letter="D" color="bg-[#ea3a6f]" />
          <span className="ml-[9px]">DataCategoryCMS.data</span>
          <AiOutlineClose size={19} className="ml-[17px] text-[#222]" />
        </div>
        <div className="flex-1 bg-white" />
      </div>
      <DataToolbar />
      <div className="flex-1 mt-[9px] ml-[16px] mr-[15px] mb-[15px] bg-white flex flex-col">
        <div className="h-[78px] shrink-0 bg-[#1890ff] text-white text-[20px] font-semibold flex items-center">
          <div className="w-[78px] h-full border-r border-white flex items-center justify-center">
            <span className="w-[26px] h-[26px] bg-white rounded-[3px] ml-[12px]" />
          </div>
          <div className="w-[318px] h-full border-r border-white flex items-center pl-[43px] pb-[2px]">
            <span className="tracking-[-0.2px]">CATEGORY_NAME</span>
            <AiOutlineClose size={22} className="ml-auto mr-[22px]" />
          </div>
          <div className="w-[317px] h-full border-r border-white flex items-center pl-[16px] pb-[2px]">
            <span className="tracking-[-0.2px]">ORDER_NUMBER</span>
            <AiOutlineClose size={22} className="ml-auto mr-[33px]" />
          </div>
        </div>
        <div className="h-[67px] shrink-0 border-b border-[#ebebeb]" />
        <div className="h-[66px] shrink-0 border-b border-[#ebebeb]" />
        <div className="h-[67px] shrink-0 border-b border-[#ebebeb]" />
      </div>
    </div>
  );
}

export default function App() {
  return (
    <div className="relative w-screen h-screen overflow-hidden flex flex-col bg-[#f5f5f5] font-['Noto_Sans',sans-serif]">
      <div className="h-[44px] shrink-0 border-b-[2px] border-[#dedede] flex items-center relative">
        <AkaLogo />
        <div className="flex text-[21px] text-[#3a3a3a]">
          <span className="w-[58px]">File</span>
          <span className="w-[67px]">Tool</span>
          <span className="w-[105px]">Manage</span>
          <span>Help</span>
        </div>
        <span className="absolute left-[1166px] text-[21.500px] text-[#333] whitespace-nowrap">
          akaATStudioLearningAnhTester - akaAT Studio
        </span>
        <div className="ml-auto flex items-center pr-[23px] gap-[25px] text-[#555]">
          <span className="w-[22px] h-[3px] rounded bg-[#555]" />
          <svg width="20" height="24" viewBox="0 0 20 24" fill="none" stroke="#666" strokeWidth="1.500">
            <rect x="1" y="5" width="14" height="18" rx="2" />
            <path d="M5 5V2c0-.5.4-1 1-1h10c1 0 3 1 3 2v14c0 1-1 2-4 2" strokeWidth="1" />
          </svg>
          <AiOutlineClose size={25} className="ml-[3px]" />
        </div>
      </div>

      <div className="flex-1 min-h-0 flex">
        <ActivityBar />
        <SidePanel />
        <EditorPane />
      </div>

      <div className="h-[32px] shrink-0 bg-[linear-gradient(90deg,#cc5200_13%,#9a4000_22%,#8f3c00_50%,#9a4000_82%,#cc5200_91%)] flex items-center justify-end text-white pr-[27px] gap-[41px]">
        <AiOutlineNotification size={22} />
        <AiOutlineAim size={24} />
      </div>

      <ExplorerWindow />
      <ExcelWindow />
    </div>
  );
}
